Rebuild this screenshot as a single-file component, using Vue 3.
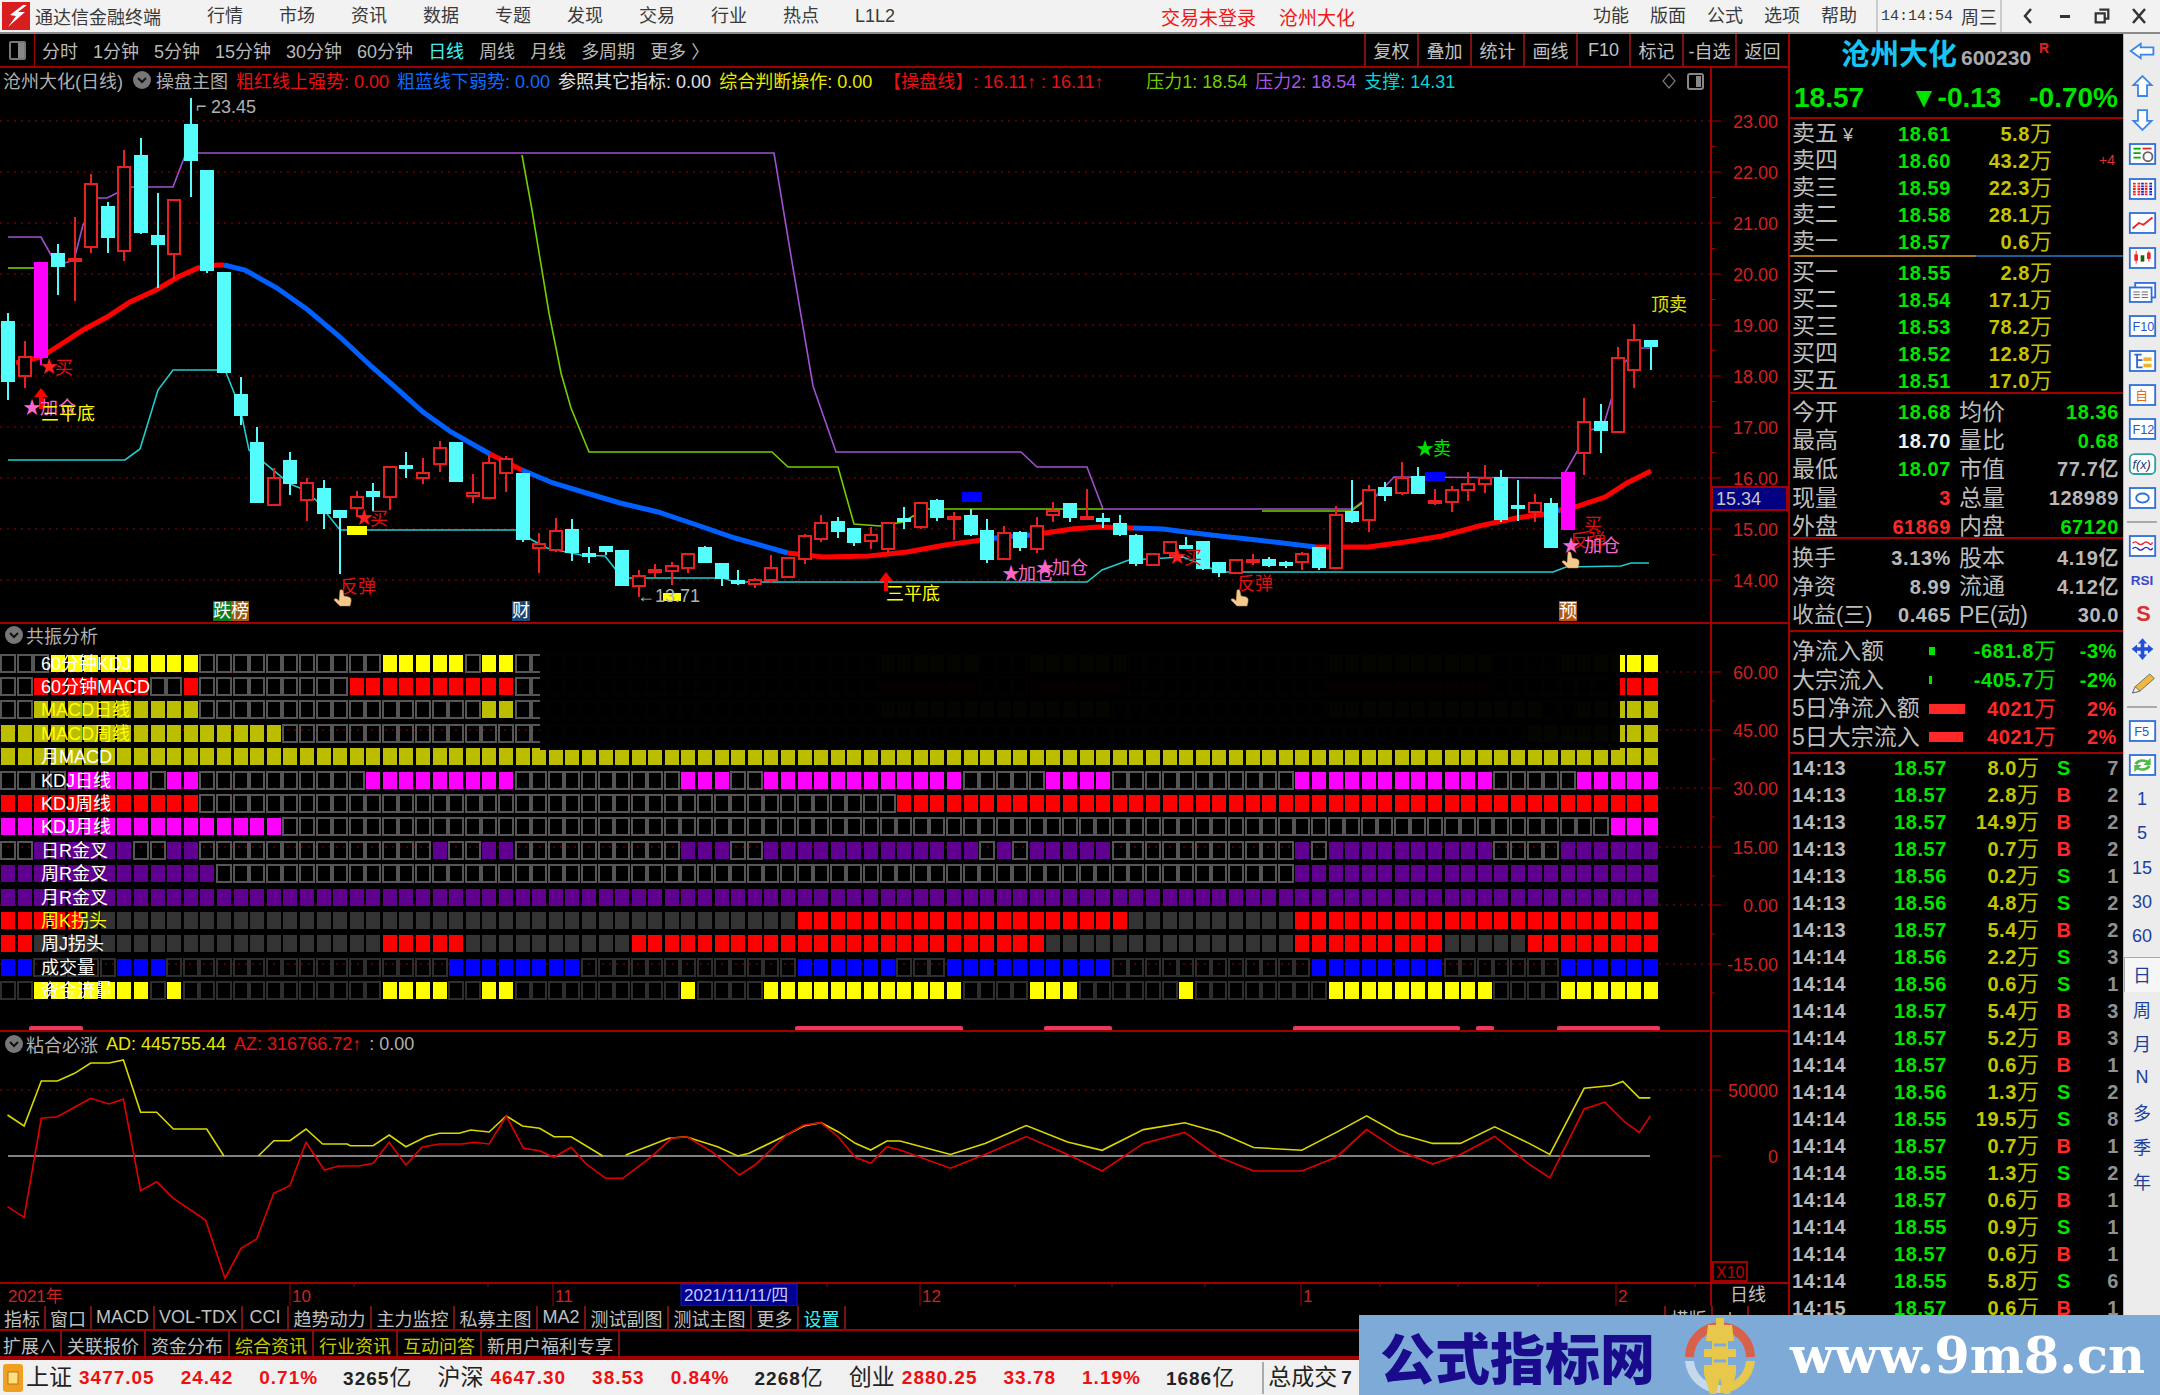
<template>
  <div class="app">
    <!-- title bar -->
    <div class="titlebar">
      <svg class="logo" viewBox="0 0 28 28">
        <rect width="28" height="28" fill="#d81e1e" />
        <path d="M21 3 L8 13 L14 14 L6 25 L23 10 L16 10 L25 3 Z" fill="#fff" />
      </svg>
      <span class="brand">通达信金融终端</span>
      <div class="menu">
        <span v-for="m in menus" :key="m">{{ m }}</span>
      </div>
      <span class="login">交易未登录</span>
      <span class="login name">沧州大化</span>
      <div class="menu right">
        <span v-for="m in rightMenus" :key="m">{{ m }}</span>
      </div>
      <div class="clock">
        <span class="time">14:14:54</span>
        <span>周三</span>
      </div>
      <div class="winbtns">
        <svg viewBox="0 0 16 20"><path d="M11 3 L5 10 L11 17" fill="none" stroke="#333" stroke-width="2.5" /></svg>
        <svg viewBox="0 0 16 20"><rect x="3" y="9" width="10" height="3" fill="#333" /></svg>
        <svg viewBox="0 0 20 20"><path d="M7 3h10v10h-4M3 7h10v10H3z" fill="none" stroke="#333" stroke-width="2.5" /></svg>
        <svg viewBox="0 0 16 20"><path d="M2 3 L14 17 M14 3 L2 17" fill="none" stroke="#333" stroke-width="2.5" /></svg>
      </div>
    </div>

    <div class="body">
      <div class="left">
        <!-- period toolbar -->
        <div class="toolbar">
          <div class="tb-icon"><i></i></div>
          <div class="periods">
            <span v-for="p in periods" :key="p" :class="{ cyan: p === '日线' }">{{ p }}</span>
          </div>
          <div class="tb-btns">
            <span v-for="b in toolBtns" :key="b">{{ b }}</span>
          </div>
        </div>

        <!-- main chart -->
        <div class="panel main-panel">
          <svg class="sv" width="1788" height="554" viewBox="0 68 1788 554">
            <line v-for="p in priceGrid" :key="'g' + p" x1="0" x2="1710" :y1="priceY(p)" :y2="priceY(p)" class="dots" />
            <polyline v-for="(l, i) in thinLines" :key="'l' + i" :points="l.pts" :stroke="l.color" class="thin" />
            <polyline v-for="(s, i) in thick" :key="'t' + i" :points="s.pts" :stroke="s.color" class="thick" />
            <rect x="347" y="526" width="20" height="9" fill="#ffff00" />
            <rect x="663" y="593" width="18" height="8" fill="#ffff00" />
            <rect x="962" y="492" width="20" height="10" fill="#0000ff" />
            <rect x="1425" y="472" width="20" height="9" fill="#0000ff" />
            <g v-for="(c, i) in candleShapes" :key="'c' + i" shape-rendering="crispEdges">
              <line :x1="c.x" :x2="c.x" :y1="c.wt" :y2="c.wb" :stroke="c.color" stroke-width="1.5" />
              <rect :x="c.x - 6" :y="c.bt" width="12" :height="c.h" :fill="c.fill" :stroke="c.color" stroke-width="1.5" />
            </g>
            <path d="M41 388 l-7 9 h5 v12 h4 v-12 h5 z" fill="#ff0000" />
            <path d="M886 572 l-7 9 h5 v10 h4 v-10 h5 z" fill="#ff0000" />
            <text v-for="(m, i) in marks" :key="'m' + i" :x="m.x" :y="m.y" :fill="m.c" :font-size="m.s || 18">{{ m.t }}</text>
            <path v-for="h in hands" :key="'h' + h[0]" :transform="`translate(${h[0]} ${h[1]})`" d="M4 0 q2 -1 3 1 l1 5 l5 1 q3 1 2 5 l-1 4 H4 L-2 10 q0 -2 3 -1 l2 2 z" fill="#f3c98d" stroke="#c88a40" stroke-width=".5" />
            <g v-for="t in tags" :key="t.t">
              <rect :x="t.x" y="601" width="18" height="20" :fill="t.bg" />
              <text :x="t.x" y="617" fill="#fff" font-size="18">{{ t.t }}</text>
            </g>
            <path d="M1669 74 l6 7 l-6 7 l-6 -7 z" fill="none" stroke="#777" stroke-width="1.2" />
            <rect x="1688" y="74" width="15" height="15" rx="2" fill="none" stroke="#888" stroke-width="2" />
            <rect x="1696" y="76" width="5" height="11" fill="#888" />
            <text x="196" y="112" fill="#aaa" font-size="18">⌐</text>
            <text x="211" y="113" fill="#b0b0b0" font-size="18">23.45</text>
            <text x="637" y="602" fill="#b0b0b0" font-size="18">←13.71</text>
            <line x1="1711" x2="1711" y1="68" y2="622" class="rule" />
            <g v-for="p in priceTicks" :key="'a' + p">
              <line x1="1711" :x2="Number.isInteger(p) ? 1721 : 1715" :y1="priceY(p)" :y2="priceY(p)" class="rule thin-rule" />
              <text v-if="Number.isInteger(p)" x="1778" :y="priceY(p) + 7" class="axis">{{ p.toFixed(2) }}</text>
            </g>
            <rect x="1712" y="487" width="75" height="23" fill="#000080" stroke="#a00000" stroke-width="2" />
            <text x="1716" y="505" fill="#c8c8c8" font-size="18">15.34</text>
          </svg>
          <div class="panel-hd">
            <span class="gray">沧州大化(日线)</span>
            <svg class="chev" viewBox="0 0 18 18"><circle cx="9" cy="9" r="9" fill="#777" /><path d="M5 7 L9 11 L13 7" fill="none" stroke="#111" stroke-width="2" /></svg>
            <span class="gray">操盘主图</span>
            <span class="red">粗红线上强势: 0.00</span>
            <span class="blue">粗蓝线下弱势: 0.00</span>
            <span class="white">参照其它指标: 0.00</span>
            <span class="yellow">综合判断操作: 0.00</span>
            <span class="red wide">【操盘线】: 16.11↑ : 16.11↑</span>
            <span class="green">压力1: 18.54</span>
            <span class="purple">压力2: 18.54</span>
            <span class="teal">支撑: 14.31</span>
          </div>
        </div>

        <!-- signal matrix -->
        <div class="panel osc-panel">
          <svg class="sv" width="1788" height="408" viewBox="0 622 1788 408">
            <line v-for="y in oscTicks" :key="'og' + y.y" x1="0" x2="1710" :y1="y.y" :y2="y.y" class="dots" />
            <g v-for="(r, ri) in matrix" :key="'r' + ri" shape-rendering="crispEdges">
              <rect v-for="c in r.cells" :key="c.i" :x="c.x" :y="r.y" width="14" height="17" :fill="c.fill" :stroke="c.stroke" :stroke-width="c.stroke === 'none' ? 0 : 2" />
            </g>
            <rect x="540" y="652" width="1080" height="98" fill="#000" fill-opacity=".98" />
            <rect v-for="b in bumps" :key="'b' + b[0]" :x="b[0]" y="1026" :width="b[1]" height="5" rx="2" fill="#e63a62" />
            <text v-for="(r, ri) in matrix" :key="'rl' + ri" x="41" :y="r.y + 15" :fill="r.text" font-size="18">{{ r.label }}</text>
            <line x1="0" x2="1788" y1="623" y2="623" class="rule" />
            <line x1="1711" x2="1711" y1="622" y2="1030" class="rule" />
            <g v-for="t in oscTicks" :key="'ot' + t.y">
              <line x1="1711" x2="1721" :y1="t.y" :y2="t.y" class="rule thin-rule" />
              <line x1="1711" x2="1715" :y1="t.y + 29" :y2="t.y + 29" class="rule thin-rule" />
              <text x="1778" :y="t.y + 7" class="axis">{{ t.t }}</text>
            </g>
          </svg>
          <div class="panel-hd second resonance">
            <svg class="chev" viewBox="0 0 18 18"><circle cx="9" cy="9" r="9" fill="#777" /><path d="M5 7 L9 11 L13 7" fill="none" stroke="#111" stroke-width="2" /></svg>
            <span class="gray">共振分析</span>
          </div>
        </div>

        <!-- AD / AZ indicator -->
        <div class="panel adz-panel">
          <svg class="sv" width="1788" height="252" viewBox="0 1030 1788 252">
            <line x1="0" x2="1710" y1="1090" y2="1090" class="dots" />
            <line x1="8" x2="1650" y1="1156" y2="1156" stroke="#808080" stroke-width="2" />
            <polyline v-for="(p, i) in adLines" :key="'ad' + i" :points="p" stroke="#d8d800" class="thin" />
            <polyline :points="azLine" stroke="#e00000" class="thin" />
            <line x1="0" x2="1788" y1="1031" y2="1031" class="rule" />
            <line x1="1711" x2="1711" y1="1030" y2="1282" class="rule" />
            <line x1="1711" x2="1721" y1="1090" y2="1090" class="rule thin-rule" />
            <line x1="1711" x2="1721" y1="1156" y2="1156" class="rule thin-rule" />
            <text x="1778" y="1097" class="axis">50000</text>
            <text x="1778" y="1163" class="axis">0</text>
            <rect x="1713" y="1262" width="34" height="19" fill="none" stroke="#a00000" stroke-width="2" />
            <text x="1716" y="1278" fill="#c00000" font-size="16">X10</text>
          </svg>
          <div class="panel-hd second">
            <svg class="chev" viewBox="0 0 18 18"><circle cx="9" cy="9" r="9" fill="#777" /><path d="M5 7 L9 11 L13 7" fill="none" stroke="#111" stroke-width="2" /></svg>
            <span class="gray">粘合必涨</span>
            <span class="yellow">AD: 445755.44</span>
            <span class="red">AZ: 316766.72↑</span>
            <span class="gray">: 0.00</span>
          </div>
        </div>

        <!-- time axis -->
        <svg class="sv xaxis" width="1788" height="24" viewBox="0 1282 1788 24">
          <line x1="0" x2="1788" y1="1283" y2="1283" class="rule" />
          <line v-for="x in monthLines" :key="x" :x1="x" :x2="x" y1="1282" y2="1306" class="rule thin-rule" />
          <line v-for="x in minorTicks" :key="'mt' + x" :x1="x" :x2="x" y1="1283" y2="1287" class="rule thin-rule" />
          <rect x="681" y="1284" width="116" height="22" fill="#000090" stroke="#2020c0" />
          <text x="8" y="1302" class="xlab">2021年</text>
          <text x="292" y="1302" class="xlab">10</text>
          <text x="555" y="1302" class="xlab">11</text>
          <text x="684" y="1301" fill="#c8c8ff" font-size="17">2021/11/11/四</text>
          <text x="922" y="1302" class="xlab">12</text>
          <text x="1303" y="1302" class="xlab">1</text>
          <text x="1618" y="1302" class="xlab">2</text>
          <text x="1730" y="1301" fill="#c0c0c0" font-size="18">日线</text>
          <line x1="1711" x2="1711" y1="1282" y2="1306" class="rule" />
        </svg>

        <!-- bottom tab rows -->
        <div class="tabs first">
          <span v-for="t in tabsA" :key="t" :class="{ cyan: t === '设置' }">{{ t }}</span>
          <span class="push">横版</span>
          <span class="plus">+</span>
        </div>
        <div class="tabs second-row">
          <span v-for="t in tabsB" :key="t" :class="{ olive: yellowTabs.includes(t) }">{{ t }}</span>
        </div>
      </div>

      <!-- quote column -->
      <div class="quote">
        <div class="q-name">
          <span class="q-title">沧州大化</span>
          <span class="q-code">600230</span>
          <sup class="q-r">R</sup>
        </div>
        <div class="q-price">
          <span>18.57</span>
          <span>▼-0.13</span>
          <span>-0.70%</span>
        </div>
        <div class="q-book sell">
          <div v-for="r in sells" :key="r[0]" class="book-row">
            <span class="lab">{{ r[0] }}<em v-if="r[0] === '卖五'"> ¥</em></span>
            <b class="up">{{ r[1] }}</b>
            <b class="vol">{{ r[2] }}<i>万</i></b>
            <small v-if="r[0] === '卖四'">+4</small>
          </div>
        </div>
        <div class="q-mid"><span></span><span></span></div>
        <div class="q-book buy">
          <div v-for="r in buys" :key="r[0]" class="book-row">
            <span class="lab">{{ r[0] }}</span>
            <b class="up">{{ r[1] }}</b>
            <b class="vol">{{ r[2] }}<i>万</i></b>
          </div>
        </div>
        <div class="q-stats">
          <div v-for="r in statsA" :key="r[0]" class="stat-row">
            <span class="lab">{{ r[0] }}</span>
            <b :class="r[2]">{{ r[1] }}</b>
            <span class="lab">{{ r[3] }}</span>
            <b :class="r[5]">{{ r[4] }}</b>
          </div>
        </div>
        <div class="q-stats three">
          <div v-for="r in statsB" :key="r[0]" class="stat-row">
            <span class="lab small">{{ r[0] }}</span>
            <b class="dim">{{ r[1] }}</b>
            <span class="lab">{{ r[2] }}</span>
            <b class="dim">{{ r[3] }}</b>
          </div>
        </div>
        <div class="q-flow">
          <div v-for="r in flows" :key="r.name" class="flow-row">
            <span class="lab">{{ r.name }}</span>
            <span class="bar-cell"><i :class="r.cls" :style="{ width: r.w + 'px', height: r.h + 'px' }"></i></span>
            <b :class="r.cls">{{ r.val }}<i>万</i></b>
            <b :class="r.cls">{{ r.pct }}</b>
          </div>
        </div>
        <div class="q-ticks">
          <div v-for="(t, i) in ticks" :key="i" class="tick-row">
            <b class="dim">{{ t[0] }}</b>
            <b class="up">{{ t[1] }}</b>
            <b class="vol">{{ t[2] }}<i>万</i></b>
            <b :class="t[3] === 'S' ? 'up' : 'dn'" class="bs">{{ t[3] }}</b>
            <b class="cnt">{{ t[4] }}</b>
          </div>
        </div>
      </div>

      <!-- tool strip -->
      <div class="side">
        <div class="s-item"><svg class="ico" viewBox="0 0 32 26"><path d="M3 13 L14 5 V9 H28 V17 H14 V21 Z" fill="#fff" stroke="#3b86e8" stroke-width="2" /></svg></div>
        <div class="s-item"><svg class="ico" viewBox="0 0 32 26"><path d="M16 2 L26 12 H21 V24 H11 V12 H6 Z" fill="#fff" stroke="#3b86e8" stroke-width="2" /></svg></div>
        <div class="s-item"><svg class="ico" viewBox="0 0 32 26"><path d="M16 24 L26 14 H21 V2 H11 V14 H6 Z" fill="#fff" stroke="#3b86e8" stroke-width="2" /></svg></div>
        <div class="s-item"><svg class="ico" viewBox="0 0 32 26"><rect x="2" y="2" width="28" height="22" fill="#fff" stroke="#2f6fdc" stroke-width="2" /><path d="M6 7h8M6 12h8M6 17h8" stroke="#0a0" stroke-width="2" /><path d="M16 7h10" stroke="#e22" stroke-width="2" /><circle cx="22" cy="16" r="5" fill="none" stroke="#666" stroke-width="2" /></svg></div>
        <div class="s-item"><svg class="ico" viewBox="0 0 32 26"><rect x="2" y="2" width="28" height="22" fill="#fff" stroke="#2f6fdc" stroke-width="2" /><path d="M7 6v14M12 6v14M20 6v14" stroke="#e22" stroke-width="3" stroke-dasharray="2 1" /><path d="M16 6v14M25 6v14" stroke="#22c" stroke-width="3" stroke-dasharray="2 1" /></svg></div>
        <div class="s-item"><svg class="ico" viewBox="0 0 32 26"><rect x="2" y="2" width="28" height="22" fill="#fff" stroke="#2f6fdc" stroke-width="2" /><path d="M5 19 L12 13 L17 15 L27 7" fill="none" stroke="#e22" stroke-width="2" /></svg></div>
        <div class="s-item"><svg class="ico" viewBox="0 0 32 26"><rect x="2" y="2" width="28" height="22" fill="#fff" stroke="#2f6fdc" stroke-width="2" /><path d="M9 5v14M23 5v12" stroke="#e22" /><rect x="7" y="9" width="4" height="7" fill="#e22" /><rect x="14" y="10" width="4" height="7" fill="#161" /><rect x="21" y="7" width="4" height="7" fill="#e22" /></svg></div>
        <div class="s-item"><svg class="ico" viewBox="0 0 32 26"><rect x="8" y="3" width="22" height="16" fill="#fff" stroke="#2f6fdc" stroke-width="2" /><rect x="2" y="8" width="24" height="16" fill="#fff" stroke="#2f6fdc" stroke-width="2" /><path d="M6 13h7M15 13h7M6 16h7M15 16h7M6 19h7M15 19h7" stroke="#555" /></svg></div>
        <div class="s-item"><svg class="ico" viewBox="0 0 32 26"><rect x="2" y="2" width="28" height="22" fill="#fff" stroke="#2f6fdc" stroke-width="2" /><text x="5" y="19" class="ico-t">F10</text></svg></div>
        <div class="s-item"><svg class="ico" viewBox="0 0 32 26"><rect x="2" y="2" width="28" height="22" fill="#fff" stroke="#2f6fdc" stroke-width="2" /><path d="M7 6h8M10 6v14h6M10 12h6" fill="none" stroke="#36c" stroke-width="2" /><rect x="17" y="9" width="9" height="4" fill="#f0b030" /><rect x="17" y="16" width="9" height="4" fill="#f0b030" /></svg></div>
        <div class="s-item"><svg class="ico" viewBox="0 0 32 26"><rect x="2" y="2" width="28" height="22" fill="#fff" stroke="#2f6fdc" stroke-width="2" /><text x="8" y="19" class="ico-t orange">自</text></svg></div>
        <div class="s-item"><svg class="ico" viewBox="0 0 32 26"><rect x="2" y="2" width="28" height="22" fill="#fff" stroke="#2f6fdc" stroke-width="2" /><text x="5" y="19" class="ico-t">F12</text></svg></div>
        <div class="s-item"><svg class="ico" viewBox="0 0 32 26"><rect x="2" y="2" width="28" height="22" rx="5" fill="#fff" stroke="#2f9f9f" stroke-width="2" /><text x="5" y="18" class="ico-t dark">f(x)</text></svg></div>
        <div class="s-item"><svg class="ico" viewBox="0 0 32 26"><rect x="2" y="2" width="28" height="22" fill="#fff" stroke="#2f6fdc" stroke-width="2" /><ellipse cx="16" cy="13" rx="7" ry="5" fill="none" stroke="#2f6fdc" stroke-width="2" /></svg></div>
        <div class="s-sep"></div>
        <div class="s-item"><svg class="ico" viewBox="0 0 32 26"><rect x="2" y="2" width="28" height="22" fill="#fff" stroke="#2f6fdc" stroke-width="2" /><path d="M5 10q3-3 6 0t6 0t6 0t4-1" fill="none" stroke="#e22" stroke-width="1.5" /><path d="M5 16q3-3 6 0t6 0t6 0t4-1" fill="none" stroke="#22c" stroke-width="1.5" /></svg></div>
        <div class="s-item"><svg class="ico" viewBox="0 0 32 26"><text x="3" y="19" class="ico-t rsi">RSI</text></svg></div>
        <div class="s-item"><svg class="ico" viewBox="0 0 32 26"><text x="9" y="21" class="ico-t bigs">S</text></svg></div>
        <div class="s-item"><svg class="ico" viewBox="0 0 32 26"><path d="M16 1 L21 7 H18 V11 H22 V8 L28 13 L22 18 V15 H18 V19 H21 L16 25 L11 19 H14 V15 H10 V18 L4 13 L10 8 V11 H14 V7 H11 Z" fill="#1e50d8" /></svg></div>
        <div class="s-item"><svg class="ico" viewBox="0 0 32 26"><path d="M5 24 L8 17 L24 3 L29 8 L13 22 Z" fill="#f0b840" stroke="#666" /><path d="M5 24 L8 17 L13 22 Z" fill="#eee" stroke="#666" /></svg></div>
        <div class="s-sep"></div>
        <div class="s-item"><svg class="ico" viewBox="0 0 32 26"><rect x="2" y="2" width="28" height="22" fill="#fff" stroke="#2f6fdc" stroke-width="2" /><text x="7" y="19" class="ico-t">F5</text></svg></div>
        <div class="s-item"><svg class="ico" viewBox="0 0 32 26"><rect x="2" y="2" width="28" height="22" fill="#fff" stroke="#2f6fdc" stroke-width="2" /><path d="M7 11 Q12 4 22 8 L25 5 V13 H17 L20 10 Q13 8 10 13 Z" fill="#52b848" /><path d="M25 15 Q20 22 10 18 L7 21 V13 H15 L12 16 Q19 18 22 13 Z" fill="#52b848" /></svg></div>
        <div v-for="n in sideNums" :key="n" class="s-item txt" :class="{ sel: n === '日' }">{{ n }}</div>
      </div>
    </div>

    <!-- market strip -->
    <div class="status">
      <svg class="st-ico" viewBox="0 0 20 28"><rect width="20" height="28" rx="3" fill="#f0a020" /><rect x="5" y="8" width="10" height="12" fill="#ffe080" stroke="#c07010" /></svg>
      <template v-for="g in indices" :key="g.name">
        <span class="st-name">{{ g.name }}</span>
        <b class="st-num first">{{ g.v }}</b>
        <b class="st-num">{{ g.d }}</b>
        <b class="st-num">{{ g.p }}</b>
        <b class="st-amt">{{ g.a }}<i>亿</i></b>
      </template>
      <span class="st-div"></span>
      <span class="st-name last">总成交</span>
      <b class="st-amt">7</b>
    </div>

    <!-- watermark over the corner -->
    <div class="watermark">
      <span class="wm-cn">公式指标网</span>
      <svg class="wm-logo" viewBox="0 0 80 80">
        <path d="M5 42 A35 35 0 0 1 75 42 H66 A26 26 0 0 0 14 42 Z" fill="#d9604a" />
        <path d="M5 46 A35 35 0 0 0 40 78 V70 A26 26 0 0 1 14 46 Z" fill="#fff" fill-opacity=".55" />
        <path d="M75 46 A35 35 0 0 1 40 78 V70 A26 26 0 0 0 66 46 Z" fill="#e8c84a" />
        <path d="M36 3 h8 v7 h8 l2 16 h-6 v8 h8 v8 h-8 v8 h8 v9 l-6 20 h-6 l-4 -16 l-4 16 h-6 l-6 -20 v-9 h8 v-8 h-8 v-8 h8 v-8 h-6 l2 -16 h8 z" fill="#e8c84a" />
        <path d="M34 30h12M34 46h12" stroke="#7eaad8" stroke-width="3" />
      </svg>
      <span class="wm-url">www.9m8.cn</span>
    </div>
  </div>
</template>

<script setup>
const menus = ['行情', '市场', '资讯', '数据', '专题', '发现', '交易', '行业', '热点', 'L1L2']
const rightMenus = ['功能', '版面', '公式', '选项', '帮助']
const periods = ['分时', '1分钟', '5分钟', '15分钟', '30分钟', '60分钟', '日线', '周线', '月线', '多周期', '更多 〉']
const toolBtns = ['复权', '叠加', '统计', '画线', 'F10', '标记', '-自选', '返回']
const tabsA = ['指标', '窗口', 'MACD', 'VOL-TDX', 'CCI', '趋势动力', '主力监控', '私募主图', 'MA2', '测试副图', '测试主图', '更多', '设置']
const tabsB = ['扩展∧', '关联报价', '资金分布', '综合资讯', '行业资讯', '互动问答', '新用户福利专享']
const yellowTabs = ['综合资讯', '行业资讯', '互动问答']
const sideNums = ['1', '5', '15', '30', '60', '日', '周', '月', 'N', '多', '季', '年']

// price scale of the main chart
const priceY = (p) => 580 - (p - 14) * 51
const priceGrid = [14, 15, 16, 17, 18, 19, 20, 21, 22, 23]
const priceTicks = []
for (let p = 14; p <= 23; p += 0.5) priceTicks.push(p)

const barX = (i) => Math.round(8.3 + 16.59 * i)

// kind, wick top, body top, body bottom, wick bottom
const candles = [
  ['c', 313, 322, 381, 400], ['r', 341, 357, 376, 388], ['m', 263, 263, 357, 365], ['c', 244, 254, 266, 295],
  ['r', 217, 259, 261, 301], ['r', 174, 184, 247, 253], ['c', 202, 207, 237, 253], ['r', 150, 167, 251, 261],
  ['c', 138, 156, 232, 234], ['c', 193, 236, 244, 288], ['r', 200, 200, 254, 280], ['c', 98, 125, 160, 197],
  ['c', 171, 171, 270, 273], ['c', 273, 273, 372, 372], ['c', 377, 395, 415, 425], ['c', 427, 443, 502, 502],
  ['r', 468, 478, 505, 505], ['c', 452, 461, 483, 495], ['r', 478, 483, 500, 521], ['c', 480, 489, 513, 529],
  ['c', 511, 511, 517, 574], ['r', 491, 497, 508, 517], ['c', 483, 492, 496, 511], ['r', 467, 467, 497, 510],
  ['c', 452, 466, 468, 478], ['r', 458, 473, 478, 484], ['r', 441, 448, 464, 472], ['c', 443, 443, 481, 481],
  ['r', 474, 493, 496, 503], ['r', 455, 463, 498, 498], ['r', 456, 459, 473, 492], ['c', 474, 474, 539, 542],
  ['r', 533, 544, 548, 573], ['r', 518, 531, 550, 552], ['c', 519, 530, 552, 561], ['c', 547, 554, 556, 563],
  ['c', 547, 547, 551, 555], ['c', 551, 551, 585, 585], ['r', 570, 576, 586, 597], ['r', 564, 570, 572, 577],
  ['r', 562, 566, 571, 585], ['r', 553, 554, 568, 573], ['c', 546, 548, 562, 562], ['c', 563, 564, 578, 586],
  ['c', 570, 581, 583, 585], ['r', 578, 580, 584, 588], ['r', 555, 568, 580, 583], ['r', 558, 558, 577, 577],
  ['r', 534, 536, 559, 564], ['r', 515, 523, 539, 542], ['c', 517, 522, 531, 538], ['c', 529, 529, 542, 546],
  ['r', 527, 535, 541, 549], ['r', 523, 523, 549, 553], ['c', 507, 519, 521, 529], ['r', 502, 503, 527, 529],
  ['c', 499, 501, 517, 521], ['r', 512, 517, 519, 540], ['c', 509, 516, 534, 536], ['c', 519, 531, 559, 563],
  ['r', 526, 533, 559, 559], ['c', 531, 533, 547, 551], ['r', 517, 526, 549, 553], ['r', 502, 511, 515, 522],
  ['c', 503, 504, 517, 522], ['r', 489, 517, 519, 520], ['c', 513, 519, 521, 528], ['c', 515, 524, 534, 536],
  ['c', 534, 536, 563, 566], ['r', 554, 554, 565, 565], ['r', 542, 542, 553, 557], ['c', 537, 546, 548, 548],
  ['c', 542, 542, 568, 570], ['c', 563, 563, 572, 577], ['r', 560, 560, 573, 573], ['r', 554, 560, 562, 565],
  ['c', 557, 560, 565, 567], ['c', 561, 563, 565, 568], ['r', 552, 554, 562, 570], ['c', 547, 548, 567, 570],
  ['r', 506, 515, 568, 569], ['c', 480, 512, 521, 523], ['r', 485, 490, 520, 532], ['c', 482, 488, 495, 501],
  ['r', 462, 478, 493, 495], ['c', 467, 477, 493, 493], ['r', 489, 501, 503, 505], ['r', 486, 490, 502, 512],
  ['r', 472, 484, 490, 501], ['r', 465, 478, 484, 493], ['c', 470, 478, 519, 522], ['c', 480, 506, 508, 521],
  ['r', 494, 503, 512, 522], ['c', 498, 504, 547, 547], ['m', 473, 473, 529, 529], ['r', 398, 422, 453, 475],
  ['c', 404, 422, 430, 453], ['r', 347, 358, 432, 432], ['r', 324, 340, 370, 388], ['c', 340, 341, 346, 370]
]
const candleColors = { c: '#54fcfc', r: '#e82020', m: '#ff00ff' }
const candleShapes = candles.map(([k, wt, bt, bb, wb], i) => ({
  x: barX(i),
  wt,
  wb,
  bt,
  h: Math.max(bb - bt, 1),
  color: candleColors[k],
  fill: k === 'r' ? '#000' : candleColors[k]
}))

const thinLines = [
  { color: '#a050d0', pts: '8,237 41,237 51,255 58,265 74,260 83,225 97,198 107,198 117,193 132,187 173,187 186,153 774,153 792,262 813,386 836,452 1021,452 1037,467 1087,467 1103,509 1353,509 1362,502 1375,497 1394,477 1562,478 1578,450 1590,430 1603,427 1612,397 1625,362 1640,348 1651,348' },
  { color: '#70d000', pts: '8,268 35,268' },
  { color: '#70d000', pts: '522,155 532,210 549,313 561,373 571,408 589,452 772,452 788,467 838,467 854,524 880,526 903,522 915,515 926,509 1103,509' },
  { color: '#70d000', pts: '1262,511 1351,511 1362,503' },
  { color: '#22cccc', pts: '8,460 125,460 140,449 158,390 173,370 225,370 235,395 242,417 249,450 290,484 300,488 316,500 340,530 518,530 532,540 547,548 581,555 605,556 616,570 620,578 723,578 735,582 1087,582 1102,570 1129,560 1183,557 1220,572 1553,572 1566,567 1621,566 1631,563 1649,563' }
]
const thick = [
  { color: '#ff0000', pts: '16,363 41,357 63,343 83,330 107,317 130,302 156,290 178,277 198,268 217,265 224,265' },
  { color: '#0060ff', pts: '224,265 245,270 277,288 308,310 340,337 372,367 395,387 423,412 451,432 490,454' },
  { color: '#ff0000', pts: '490,454 522,470' },
  { color: '#0060ff', pts: '522,470 553,483 593,495 620,503 658,512 697,525 735,538 788,553' },
  { color: '#ff0000', pts: '788,553 823,557 869,556 907,552 945,545 982,540' },
  { color: '#0060ff', pts: '982,540 1003,537 1032,535' },
  { color: '#ff0000', pts: '1032,535 1072,529 1098,527 1133,528' },
  { color: '#0060ff', pts: '1133,528 1163,529 1194,533 1220,536 1257,540 1316,547' },
  { color: '#ff0000', pts: '1316,547 1368,547 1405,542 1442,536 1479,526 1516,518 1545,514' },
  { color: '#0060ff', pts: '1545,514 1560,510' },
  { color: '#ff0000', pts: '1560,510 1575,507 1605,497 1627,483 1651,471' }
]

const marks = [
  { x: 40, y: 373, t: '★', c: '#ff2020' }, { x: 55, y: 374, t: '买', c: '#e01010' },
  { x: 23, y: 414, t: '★', c: '#ff66cc' }, { x: 40, y: 414, t: '加仓', c: '#ff66cc' },
  { x: 41, y: 420, t: '三平底', c: '#ffff00' },
  { x: 355, y: 524, t: '★', c: '#ff2020' }, { x: 370, y: 525, t: '买', c: '#e01010' },
  { x: 340, y: 593, t: '反弹', c: '#e01010' },
  { x: 886, y: 600, t: '三平底', c: '#ffff00' },
  { x: 1002, y: 580, t: '★', c: '#ff66cc' }, { x: 1018, y: 580, t: '加仓', c: '#ff66cc' },
  { x: 1036, y: 574, t: '★', c: '#ff66cc' }, { x: 1052, y: 574, t: '加仓', c: '#ff66cc' },
  { x: 1168, y: 563, t: '★', c: '#ff2020' }, { x: 1184, y: 564, t: '买', c: '#e01010' },
  { x: 1237, y: 590, t: '反弹', c: '#e01010' },
  { x: 1416, y: 455, t: '★', c: '#00e000' }, { x: 1433, y: 455, t: '卖', c: '#00e000' },
  { x: 1651, y: 311, t: '顶卖', c: '#e0e000' },
  { x: 1584, y: 531, t: '买', c: '#e01010' },
  { x: 1570, y: 547, t: '反弹', c: '#e01010' },
  { x: 1562, y: 552, t: '★', c: '#ff66cc' }, { x: 1584, y: 552, t: '加仓', c: '#ff66cc' }
]
const hands = [[336, 590], [1233, 590], [1564, 552]]
const tags = [
  { x: 213, t: '跌', bg: '#0a7a1a' }, { x: 231, t: '榜', bg: '#9a5a10' },
  { x: 512, t: '财', bg: '#184878' }, { x: 1559, t: '预', bg: '#b05a10' }
]

// resonance matrix: each row lists the runs of filled bars
const olive = '#bdbd00'
const violet = '#5f0090'
const rowsDef = [
  ['60分钟KDJ', '#ffff00', '#fff', 'o', [[3, 11], [23, 27], [29, 30], [53, 58], [62, 67], [80, 89], [94, 99]]],
  ['60分钟MACD', '#ff0000', '#fff', 'o', [[2, 8], [11, 11], [21, 30], [53, 58], [62, 67], [80, 89], [97, 99]]],
  ['MACD日线', olive, '#ffff00', 'o', [[2, 11], [29, 30], [53, 66], [80, 92], [95, 99]]],
  ['MACD周线', olive, '#ffff00', 'o', [[0, 16], [92, 99]]],
  ['月MACD', olive, '#fff', 'o', [[0, 99]]],
  ['KDJ日线', '#ff00ff', '#fff', 'o', [[4, 8], [10, 11], [22, 30], [41, 43], [46, 57], [63, 66], [78, 89], [95, 99]]],
  ['KDJ周线', '#ff0000', '#fff', 'o', [[0, 11], [54, 99]]],
  ['KDJ月线', '#ff00ff', '#fff', 'o', [[0, 16], [97, 99]]],
  ['日R金叉', violet, '#fff', 'o', [[2, 7], [10, 11], [26, 26], [29, 30], [41, 43], [46, 58], [60, 60], [62, 66], [78, 78], [80, 89], [94, 99]]],
  ['周R金叉', violet, '#fff', 'o', [[0, 12], [78, 99]]],
  ['月R金叉', violet, '#fff', 'o', [[0, 99]]],
  ['周K拐头', '#ff0000', '#ffff00', 'g', [[0, 4], [48, 67], [78, 99]]],
  ['周J拐头', '#ff0000', '#fff', 'g', [[0, 1], [23, 27], [38, 62], [78, 86], [92, 99]]],
  ['成交量', '#0000ff', '#fff', 'd', [[0, 1], [7, 9], [27, 34], [48, 53], [57, 66], [79, 86], [94, 99]]],
  ['资金流量', '#ffff00', '#fff', 'd', [[2, 8], [10, 10], [23, 26], [29, 30], [41, 41], [46, 57], [62, 64], [71, 71], [80, 89], [94, 99]]]
]
const offStyle = {
  o: { fill: 'none', stroke: '#565656' },
  g: { fill: '#333', stroke: 'none' },
  d: { fill: 'none', stroke: '#2e2e2e' }
}
const matrix = rowsDef.map(([label, color, text, off, runs], r) => {
  const cells = []
  for (let i = 0; i < 100; i++) {
    const on = runs.some(([a, b]) => i >= a && i <= b)
    const st = on ? { fill: color, stroke: 'none' } : offStyle[off]
    cells.push({ i, x: barX(i) - 7, fill: st.fill, stroke: st.stroke })
  }
  return { label, text, y: Math.round(654.5 + 23.4 * r), cells }
})
const oscTicks = [
  { y: 672, t: '60.00' }, { y: 730, t: '45.00' }, { y: 788, t: '30.00' },
  { y: 847, t: '15.00' }, { y: 905, t: '0.00' }, { y: 964, t: '-15.00' }
]
const bumps = [[29, 54], [795, 168], [1044, 68], [1293, 167], [1476, 18], [1557, 103]]

// AD / AZ lines, read off the reference in its crop and screen scales
const fromCrop = (arr) => arr.map(([x, y]) => `${(x / 1.742).toFixed(1)},${(1030 + y / 3).toFixed(1)}`)
const fromShot = (arr) => arr.map(([x, y]) => `${(x * 1.3776).toFixed(1)},${(y * 1.3776).toFixed(1)}`)
const adLines = [
  fromCrop([[13, 255], [42, 288], [72, 153], [100, 153], [130, 130], [158, 99], [190, 99], [215, 90], [245, 247], [273, 247], [302, 297], [360, 297], [390, 378]]).join(' '),
  fromCrop([[450, 378], [477, 332], [505, 332], [533, 297], [562, 342], [605, 342], [610, 347], [650, 347], [678, 315], [707, 350], [742, 320], [765, 310], [800, 310], [820, 300], [852, 306], [882, 258], [910, 288], [940, 295], [965, 320], [995, 320], [1050, 378]]).join(' '),
  fromCrop([[1090, 375], [1135, 345], [1165, 325], [1195, 320], [1250, 350], [1285, 378], [1305, 370], [1370, 315], [1400, 288], [1430, 278], [1460, 305], [1490, 340], [1517, 360], [1545, 333], [1568, 333]])
    .concat(fromShot([[690, 838], [715, 830], [745, 817], [775, 829], [800, 835], [830, 820], [860, 815], [885, 822], [910, 833], [945, 835], [970, 822], [992, 810], [1015, 823], [1040, 830], [1060, 830], [1085, 818], [1110, 830], [1125, 838], [1150, 790], [1170, 788], [1178, 785], [1190, 797], [1198, 797]])).join(' ')
]
const azLine = fromCrop([[13, 530], [42, 562], [72, 265], [100, 260], [130, 232], [158, 205], [190, 222], [215, 207], [245, 482], [273, 455], [302, 505], [358, 570], [392, 745], [420, 655], [447, 627], [477, 490], [505, 467], [533, 337], [565, 420], [590, 408], [625, 408], [650, 400], [678, 337], [707, 405], [735, 352], [765, 342], [805, 342], [825, 337], [852, 342], [882, 258], [912, 355], [940, 362], [965, 382], [995, 352], [1020, 400], [1055, 445], [1085, 445], [1135, 380], [1170, 325], [1197, 320], [1240, 365], [1288, 435], [1315, 405], [1370, 315], [1400, 285], [1430, 278], [1460, 320], [1490, 382], [1517, 400], [1545, 350], [1568, 360]])
  .concat(fromShot([[690, 848], [715, 838], [745, 825], [775, 838], [800, 850], [830, 830], [860, 822], [885, 840], [910, 850], [945, 850], [970, 840], [992, 820], [1015, 835], [1040, 845], [1060, 838], [1085, 825], [1110, 845], [1125, 855], [1150, 805], [1165, 800], [1180, 815], [1190, 822], [1198, 810]])).join(' ')

const monthLines = [290, 553, 920, 1301, 1616]
const minorTicks = [354, 488, 827, 1015, 1112, 1205, 1380, 1458, 1538, 1695]

const sells = [
  ['卖五', '18.61', '5.8'], ['卖四', '18.60', '43.2'], ['卖三', '18.59', '22.3'],
  ['卖二', '18.58', '28.1'], ['卖一', '18.57', '0.6']
]
const buys = [
  ['买一', '18.55', '2.8'], ['买二', '18.54', '17.1'], ['买三', '18.53', '78.2'],
  ['买四', '18.52', '12.8'], ['买五', '18.51', '17.0']
]
const statsA = [
  ['今开', '18.68', 'up', '均价', '18.36', 'up'],
  ['最高', '18.70', 'wh', '量比', '0.68', 'up'],
  ['最低', '18.07', 'up', '市值', '77.7亿', 'dim'],
  ['现量', '3', 'dn', '总量', '128989', 'dim'],
  ['外盘', '61869', 'dn', '内盘', '67120', 'up']
]
const statsB = [
  ['换手', '3.13%', '股本', '4.19亿'],
  ['净资', '8.99', '流通', '4.12亿'],
  ['收益(三)', '0.465', 'PE(动)', '30.0']
]
const flows = [
  { name: '净流入额', w: 6, h: 8, cls: 'up', val: '-681.8', pct: '-3%' },
  { name: '大宗流入', w: 3, h: 8, cls: 'up', val: '-405.7', pct: '-2%' },
  { name: '5日净流入额', w: 36, h: 10, cls: 'dn', val: '4021', pct: '2%' },
  { name: '5日大宗流入', w: 34, h: 10, cls: 'dn', val: '4021', pct: '2%' }
]
const ticks = [
  ['14:13', '18.57', '8.0', 'S', 7], ['14:13', '18.57', '2.8', 'B', 2], ['14:13', '18.57', '14.9', 'B', 2],
  ['14:13', '18.57', '0.7', 'B', 2], ['14:13', '18.56', '0.2', 'S', 1], ['14:13', '18.56', '4.8', 'S', 2],
  ['14:13', '18.57', '5.4', 'B', 2], ['14:14', '18.56', '2.2', 'S', 3], ['14:14', '18.56', '0.6', 'S', 1],
  ['14:14', '18.57', '5.4', 'B', 3], ['14:14', '18.57', '5.2', 'B', 3], ['14:14', '18.57', '0.6', 'B', 1],
  ['14:14', '18.56', '1.3', 'S', 2], ['14:14', '18.55', '19.5', 'S', 8], ['14:14', '18.57', '0.7', 'B', 1],
  ['14:14', '18.55', '1.3', 'S', 2], ['14:14', '18.57', '0.6', 'B', 1], ['14:14', '18.55', '0.9', 'S', 1],
  ['14:14', '18.57', '0.6', 'B', 1], ['14:14', '18.55', '5.8', 'S', 6], ['14:15', '18.57', '0.6', 'B', 1]
]
const indices = [
  { name: '上证', v: '3477.05', d: '24.42', p: '0.71%', a: '3265' },
  { name: '沪深', v: '4647.30', d: '38.53', p: '0.84%', a: '2268' },
  { name: '创业', v: '2880.25', d: '33.78', p: '1.19%', a: '1686' }
]
</script>

<style>
html, body {
  margin: 0;
  background: #000;
}
</style>

<style scoped>
.app {
  position: relative;
  width: 2160px;
  height: 1395px;
  display: flex;
  flex-direction: column;
  overflow: hidden;
  background: #000;
  font-family: "Liberation Sans", "Noto Sans CJK SC", sans-serif;
  font-size: 18px;
  color: #c0c0c0;
}

/* title bar */
.titlebar {
  height: 34px;
  box-sizing: border-box;
  flex: none;
  display: flex;
  align-items: center;
  background: #f2f2f2;
  border-bottom: 2px solid #8a8a8a;
  color: #3a3a3a;
}
.logo {
  width: 28px;
  height: 28px;
  margin-left: 2px;
}
.brand {
  margin-left: 5px;
  width: 125px;
  white-space: nowrap;
}
.menu {
  display: flex;
  align-items: center;
  gap: 36px;
  margin-left: 47px;
  line-height: 20px;
}
.menu.right {
  margin-left: auto;
  gap: 21px;
}
.login {
  color: #f01818;
  font-size: 19px;
  margin-left: 266px;
}
.login.name {
  margin-left: 23px;
}
.clock {
  display: flex;
  align-items: center;
  gap: 8px;
  height: 32px;
  margin-left: 19px;
  padding: 0 3px;
  border-left: 2px solid #ccc;
  border-right: 2px solid #ccc;
}
.time {
  font-family: "Liberation Mono", monospace;
  font-size: 15px;
}
.winbtns {
  display: flex;
  align-items: center;
  gap: 19px;
  margin-left: 17px;
  margin-right: 12px;
}
.winbtns svg {
  width: 18px;
  height: 20px;
}

.body {
  flex: 1;
  display: flex;
  min-height: 0;
}
.left {
  width: 1788px;
  flex: none;
  display: flex;
  flex-direction: column;
}

/* toolbar */
.toolbar {
  height: 34px;
  flex: none;
  box-sizing: border-box;
  display: flex;
  align-items: stretch;
  border-bottom: 2px solid #a00000;
}
.tb-icon {
  width: 34px;
  display: flex;
  align-items: center;
  justify-content: center;
  border-right: 1px solid #a00000;
}
.tb-icon i {
  display: block;
  width: 13px;
  height: 15px;
  border: 2px solid #777;
  border-radius: 2px;
  background: linear-gradient(90deg, #000 55%, #888 55%);
}
.periods {
  display: flex;
  align-items: center;
  gap: 15px;
  margin-left: 7px;
  color: #b8b8b8;
}
.cyan {
  color: #40f0f0;
}
.tb-btns {
  display: flex;
  margin-left: auto;
}
.tb-btns span {
  width: 51px;
  border-left: 2px solid #7a1010;
  display: flex;
  align-items: center;
  justify-content: center;
  white-space: nowrap;
}

/* chart panels */
.panel {
  position: relative;
  flex: none;
}
.main-panel {
  height: 554px;
}
.osc-panel {
  height: 408px;
}
.adz-panel {
  height: 252px;
}
.sv {
  display: block;
}
.sv text {
  font-family: "Liberation Sans", "Noto Sans CJK SC", sans-serif;
}
.dots {
  stroke: #a00000;
  stroke-width: 1;
  stroke-dasharray: 2 5;
}
.thin {
  fill: none;
  stroke-width: 1.6;
}
.thick {
  fill: none;
  stroke-width: 5;
}
.rule {
  stroke: #a00000;
  stroke-width: 2;
}
.thin-rule {
  stroke-width: 1;
}
.axis {
  fill: #d02020;
  font-size: 18px;
  text-anchor: end;
}
.xlab {
  fill: #d02020;
  font-size: 17px;
}
.panel-hd {
  position: absolute;
  top: 1px;
  left: 3px;
  display: flex;
  align-items: center;
  gap: 8px;
  height: 22px;
  white-space: nowrap;
  font-size: 18px;
}
.panel-hd.second {
  top: 3px;
  left: 3px;
}
.panel-hd.resonance {
  top: 2px;
}
.panel-hd .chev {
  width: 18px;
  height: 18px;
  margin: 0 -3px 0 2px;
}
.panel-hd.second .chev {
  margin-right: -5px;
}
.gray {
  color: #b0b0b0;
}
.red {
  color: #e81010;
}
.blue {
  color: #0a6cff;
}
.white {
  color: #e0e0e0;
}
.yellow {
  color: #e8e800;
}
.green {
  color: #70d000;
}
.purple {
  color: #a858e0;
}
.teal {
  color: #00d8d8;
}
.wide {
  width: 255px;
  margin-left: 3px;
}

/* time axis and tabs */
.xaxis {
  flex: none;
}
.tabs {
  height: 27px;
  flex: none;
  box-sizing: border-box;
  display: flex;
  align-items: stretch;
  border-bottom: 2px solid #a00000;
  white-space: nowrap;
}
.tabs.first {
  height: 25px;
}
.tabs span {
  display: flex;
  align-items: center;
  justify-content: center;
  box-sizing: border-box;
  min-width: 46px;
  padding: 0 4px;
  border-right: 2px solid #7a1010;
}
.tabs.first span:nth-child(n+6) {
  padding: 0 4.5px;
}
.tabs.second-row span {
  padding: 2px 5px 0;
}
.tabs.second-row span:first-child {
  padding: 2px 3px 0;
}
.tabs .olive {
  color: #c8c800;
}
.tabs.first .push {
  margin-left: auto;
  border-left: 2px solid #7a1010;
  padding: 0 5px;
}
.tabs.first .plus {
  width: 36px;
  min-width: 36px;
  padding: 0;
  margin-right: 39px;
}

/* quote column */
.quote {
  width: 335px;
  flex: none;
  box-sizing: border-box;
  border-left: 2px solid #a00000;
  overflow: hidden;
  font-size: 23px;
  line-height: 1;
}
.quote b {
  font-weight: 700;
  font-size: 20px;
  letter-spacing: .6px;
  text-align: right;
  white-space: nowrap;
}
.quote b i, .quote .bar-cell i {
  font-style: normal;
}
.quote b i {
  font-weight: 400;
  font-size: 22px;
  letter-spacing: 0;
}
.lab {
  color: #bdbdbd;
  white-space: nowrap;
}
.lab em {
  font-style: normal;
  font-size: 18px;
}
.lab.small {
  font-size: 22px;
}
.up {
  color: #00e400;
}
.dn {
  color: #ff2828;
}
.wh {
  color: #f0f0f0;
}
.dim {
  color: #b8b8b8;
}
.vol {
  color: #c4c400;
}
.q-name {
  height: 42px;
  display: flex;
  align-items: center;
  padding-left: 51px;
}
.q-title {
  font-size: 29px;
  font-weight: 700;
  color: #18c4f0;
}
.quote .q-code {
  font-size: 21px;
  font-weight: 700;
  color: #aaa;
  margin: 4px 0 0 4px;
}
.q-r {
  font-size: 14px;
  font-weight: 700;
  color: #e02020;
  margin: -14px 0 0 8px;
}
.q-price {
  height: 43px;
  box-sizing: border-box;
  display: flex;
  align-items: center;
  justify-content: space-between;
  padding: 2px 5px 0 4px;
  border-bottom: 2px solid #a00000;
  font-size: 28px;
  font-weight: 700;
  color: #00e400;
  white-space: nowrap;
}
.q-price span:first-child {
  margin-right: 18px;
}
.q-book.sell {
  padding-top: 1px;
}
.book-row {
  position: relative;
  height: 27px;
  display: grid;
  grid-template-columns: 99px 60px 101px;
  align-items: center;
  padding-left: 2px;
}
.book-row small {
  position: absolute;
  right: 8px;
  top: 6px;
  font-size: 14px;
  color: #e03030;
}
.q-mid {
  display: flex;
  height: 2px;
}
.q-mid span:first-child {
  width: 186px;
  background: #a87818;
}
.q-mid span:last-child {
  flex: 1;
  background: #1c5c98;
}
.q-book.buy {
  height: 137px;
  box-sizing: border-box;
  padding-top: 2px;
  border-bottom: 2px solid #a00000;
}
.q-stats {
  height: 145px;
  box-sizing: border-box;
  padding-top: 4px;
  border-bottom: 2px solid #a00000;
}
.q-stats.three {
  height: 93px;
  padding-top: 5px;
}
.stat-row {
  height: 28.6px;
  display: grid;
  grid-template-columns: 99px 60px 90px 78px;
  align-items: center;
  padding-left: 2px;
}
.stat-row .lab:nth-child(3) {
  margin-left: 8px;
}
.q-flow {
  height: 122px;
  box-sizing: border-box;
  padding-top: 5px;
  border-bottom: 2px solid #a00000;
}
.flow-row {
  height: 28.7px;
  display: grid;
  grid-template-columns: 137px 40px 87px 61px;
  align-items: center;
  padding-left: 2px;
}
.bar-cell {
  display: flex;
  align-items: center;
}
.bar-cell i {
  display: block;
}
.bar-cell i.up {
  background: #00e400;
}
.bar-cell i.dn {
  background: #ff2828;
}
.tick-row {
  height: 27.05px;
  display: grid;
  grid-template-columns: 60px 95px 92px 50px 30px;
  align-items: center;
  padding-left: 2px;
}
.tick-row b:first-child {
  text-align: left;
}
.quote .bs {
  text-align: center;
}
.tick-row .cnt {
  color: #909090;
}

/* tool strip */
.side {
  flex: 1;
  min-width: 0;
  background: #ececec;
  display: flex;
  flex-direction: column;
  align-items: center;
  box-sizing: border-box;
  border-left: 1px solid #bbb;
}
.s-item {
  width: 100%;
  height: 34.4px;
  flex: none;
  display: flex;
  align-items: center;
  justify-content: center;
}
.s-item.txt {
  color: #1c3f9c;
  font-size: 18px;
}
.s-item.txt.sel {
  margin-top: 3px;
  background: #f6f6f6;
  box-shadow: inset 1px 1px 0 #aaa;
}
.s-sep {
  flex: none;
  height: 13px;
  width: 30px;
  background: linear-gradient(#aaa, #aaa) center / 100% 2px no-repeat;
}
.ico {
  width: 29px;
  height: 24px;
}
.ico-t {
  font-family: "Liberation Sans", sans-serif;
  font-size: 14px;
  fill: #2858c8;
}
.ico-t.orange {
  fill: #e86810;
  font-family: "Noto Sans CJK SC", sans-serif;
}
.ico-t.dark {
  fill: #1a3a78;
  font-style: italic;
}
.ico-t.rsi {
  font-weight: 700;
  font-size: 15px;
  fill: #3a48c8;
}
.ico-t.bigs {
  font-weight: 700;
  font-size: 24px;
  fill: #d83030;
}

/* market strip */
.status {
  height: 37px;
  flex: none;
  box-sizing: border-box;
  display: flex;
  align-items: center;
  background: #f0f0f0;
  border-top: 2px solid #a00000;
  white-space: nowrap;
  color: #222;
  line-height: 1;
}
.st-ico {
  width: 20px;
  height: 30px;
  margin: 0 3px;
}
.st-name {
  font-size: 23px;
  margin-left: 25px;
}
.st-ico + .st-name {
  margin-left: 0;
}
.st-num {
  font-size: 19px;
  letter-spacing: 1px;
  color: #ee1010;
  margin-left: 26px;
}
.st-num.first {
  margin-left: 7px;
}
.st-amt {
  font-size: 19px;
  letter-spacing: 1px;
  margin-left: 25px;
}
.st-amt i {
  font-style: normal;
  font-weight: 400;
  font-size: 22px;
}
.st-div {
  width: 2px;
  height: 32px;
  background: #aaa;
  margin-left: 27px;
}
.st-name.last {
  margin-left: 4px;
}
.st-name.last + .st-amt {
  margin-left: 4px;
}

/* watermark */
.watermark {
  position: absolute;
  left: 1359px;
  top: 1315px;
  right: 0;
  bottom: 0;
  display: flex;
  align-items: center;
  background: #7eaad8;
}
.wm-cn {
  margin-left: 21px;
  font-family: "Noto Sans CJK SC", sans-serif;
  font-size: 55px;
  font-weight: 900;
  color: #1a0a8c;
  line-height: 1;
}
.wm-logo {
  width: 80px;
  height: 80px;
  margin-left: 25px;
  flex: none;
}
.wm-url {
  margin-left: 30px;
  font-family: "DejaVu Serif", serif;
  font-weight: 700;
  font-size: 51px;
  color: #fff;
  white-space: nowrap;
}
</style>
